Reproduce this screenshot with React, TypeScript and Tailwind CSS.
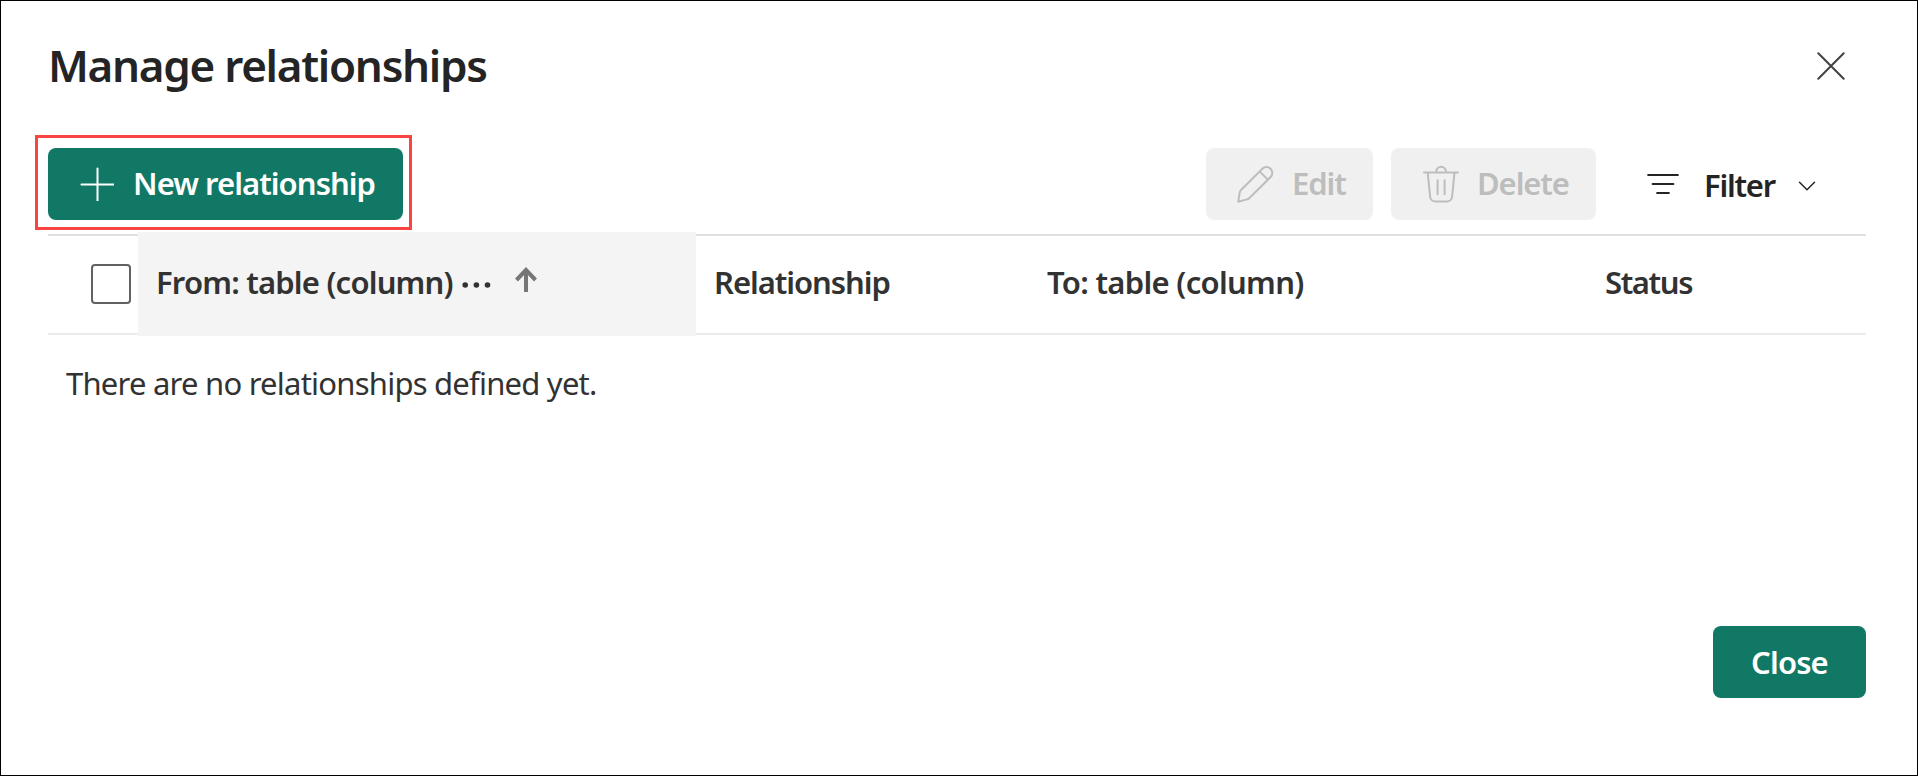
import type { ReactNode } from "react";

function PlusIcon() {
  return (
    <svg className="h-[34px] w-[34px] shrink-0" viewBox="0 0 34 34" fill="none" stroke="currentColor" strokeWidth="2" strokeLinecap="round">
      <path d="M17.5 1.500v32M1.500 17.5h32" />
    </svg>
  );
}

function PencilIcon() {
  return (
    <svg className="h-[37px] w-[37px] shrink-0" viewBox="0 0 37 37" fill="none" stroke="currentColor" strokeWidth="2" strokeLinejoin="round">
      <path d="M1.2 35.8l1.6-9.6q.3-1.3 1.2-2.2L25.4 2.8a5.5 5.5 0 0 1 8.2 8.2L12.2 32.2q-.9.9-2.2 1.2zM22.8 5.6l7.8 7.8" />
    </svg>
  );
}

function TrashIcon() {
  return (
    <svg className="h-[38px] w-[36px] shrink-0" viewBox="0 0 36 38" fill="none" stroke="currentColor" strokeWidth="2" strokeLinecap="round" strokeLinejoin="round">
      <path d="M1 7.5h34M13.3 7.5v-1a4.8 4.8 0 0 1 9.6 0v1M4.7 7.5l2.4 24.2a5.2 5.2 0 0 0 5.2 4.8h11.6a5.2 5.2 0 0 0 5.2-4.8l2.4-24.2M14.6 15.3v14M21.6 15.3v14" />
    </svg>
  );
}

function FilterIcon() {
  return (
    <svg className="h-[22px] w-[32px] shrink-0" viewBox="0 0 32 22" fill="none" stroke="currentColor" strokeWidth="2.2" strokeLinecap="round">
      <path d="M1.2 2h29.6M5.7 11h20.6M10.2 20h11.6" />
    </svg>
  );
}

function HeaderCell({ children, className }: { children?: ReactNode; className: string }) {
  return (
    <div className={`mt-[2px] mb-px flex items-center border-t-2 border-b-2 border-t-[#e0e0e0] border-b-[#ebebeb] pb-[5px] ${className}`}>
      {children}
    </div>
  );
}

export default function App() {
  return (
    <div className="flex h-[776px] w-[1918px] flex-col border border-black bg-white pr-[51px] pl-[47px] font-['Noto_Sans','Open_Sans',sans-serif] text-[31px] leading-[40px] font-semibold text-[#242424]">
      <header className="flex h-[128px] items-center justify-between pr-[21px]">
        <h1 className="text-[44px] leading-[60px] tracking-[-1.28px]">Manage relationships</h1>
        <button aria-label="Close dialog" className="mt-[2px]">
          <svg className="h-[28px] w-[28px]" viewBox="0 0 28 28" fill="none" stroke="#424242" strokeWidth="2" strokeLinecap="round">
            <path d="M1.3 1.3l25.4 25.4M26.7 1.3L1.3 26.7" />
          </svg>
        </button>
      </header>

      <div className="mt-[6px] -ml-[13px] flex h-[96px] items-start justify-between">
        <div className="h-[95px] w-[377px] border-[3px] border-[#fa4343] pt-[10px] pl-[10px]">
          <button className="flex h-[72px] w-[355px] items-center rounded-[8px] bg-[#117865] pl-[32px] text-white">
            <PlusIcon />
            <span className="mb-[3px] ml-[19px] tracking-[-0.95px]">New relationship</span>
          </button>
        </div>
        <div className="flex items-center pt-[13px]">
          <button disabled className="flex h-[72px] w-[167px] items-center rounded-[8px] bg-[#f0f0f0] pl-[31px] text-[#bdbdbd]">
            <PencilIcon />
            <span className="mb-[3px] ml-[18px] tracking-[-1.1px]">Edit</span>
          </button>
          <button disabled className="ml-[18px] flex h-[72px] w-[205px] items-center rounded-[8px] bg-[#f0f0f0] pl-[32px] text-[#bdbdbd]">
            <TrashIcon />
            <span className="mb-[3px] ml-[18px] tracking-[-1.1px]">Delete</span>
          </button>
          <button className="ml-[51px] flex h-[72px] w-[219px] items-center">
            <FilterIcon />
            <span className="mt-px ml-[24px] w-[73px] tracking-[-1.25px]">Filter</span>
            <svg className="mt-[3px] ml-[22px] h-[10px] w-[18px]" viewBox="0 0 18 10" fill="none" stroke="currentColor" strokeWidth="1.5" strokeLinecap="round" strokeLinejoin="round">
              <path d="M1.5 1.300l7.500 7.500 7.500-7.500" />
            </svg>
          </button>
        </div>
      </div>

      <div className="mt-px flex h-[104px] text-[#323232]">
        <HeaderCell className="w-[90px] pl-[43px]">
          <span className="mt-[4px] block h-[40px] w-[40px] rounded-[4px] border-2 border-[#616161]" />
        </HeaderCell>
        <div className="flex w-[558px] items-center bg-[#f4f4f4] pb-[4px] pl-[18px]">
          <span className="w-[298px] tracking-[-0.81px]">From: table (column)</span>
          <svg className="mt-[6px] ml-[8px] h-[6px] w-[29px]" viewBox="0 0 29 6" fill="currentColor">
            <circle cx="3.2" cy="3" r="2.8" />
            <circle cx="14.4" cy="3" r="2.8" />
            <circle cx="25.5" cy="3" r="2.8" />
          </svg>
          <svg className="-mt-[5px] ml-[24px] h-[25px] w-[22px]" viewBox="0 0 22 25" fill="none" stroke="#767676" strokeWidth="4">
            <path d="M11 25V3M1.5 13L11 3l9.5 10" />
          </svg>
        </div>
        <HeaderCell className="w-[333px] pl-[18px]">
          <span className="mb-px tracking-[-1.05px]">Relationship</span>
        </HeaderCell>
        <HeaderCell className="w-[557px] pl-[18px]">
          <span className="mb-px tracking-[-0.7px]">To: table (column)</span>
        </HeaderCell>
        <HeaderCell className="w-[280px] pl-[19px]">
          <span className="mb-px tracking-[-1.4px]">Status</span>
        </HeaderCell>
      </div>

      <p className="mt-[27px] pl-[18px] font-normal tracking-[-0.77px] text-[#323232]">There are no relationships defined yet.</p>

      <footer className="mt-auto mb-[77px] flex justify-end">
        <button className="h-[72px] w-[153px] rounded-[8px] bg-[#117865] tracking-[-0.85px] text-white">Close</button>
      </footer>
    </div>
  );
}
